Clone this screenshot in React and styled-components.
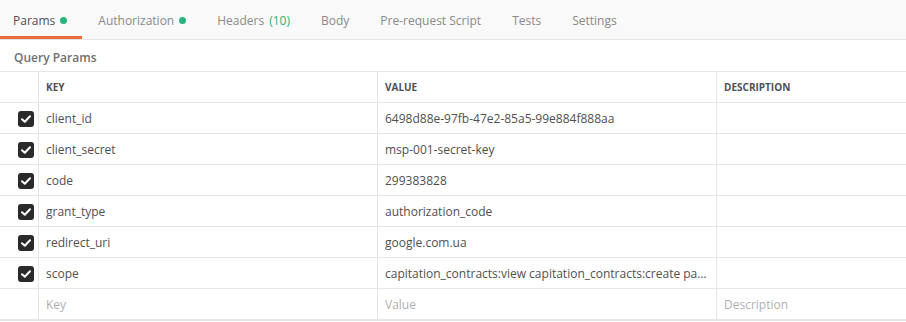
import React from 'react';
import styled, { createGlobalStyle } from 'styled-components';

const GlobalStyle = createGlobalStyle`
  html, body {
    margin: 0;
    padding: 0;
    background: #ffffff;
  }
  body {
    font-family: "Open Sans", "Liberation Sans", sans-serif;
  }
`;

const tabs = [
  { label: 'Params', dot: true, active: true },
  { label: 'Authorization', dot: true },
  { label: 'Headers', count: 10 },
  { label: 'Body' },
  { label: 'Pre-request Script' },
  { label: 'Tests' },
  { label: 'Settings' },
];

const params = [
  { key: 'client_id', value: '6498d88e-97fb-47e2-85a5-99e884f888aa' },
  { key: 'client_secret', value: 'msp-001-secret-key' },
  { key: 'code', value: '299383828' },
  { key: 'grant_type', value: 'authorization_code' },
  { key: 'redirect_uri', value: 'google.com.ua' },
  {
    key: 'scope',
    value:
      'capitation_contracts:view capitation_contracts:create party:read legal_entity:read employee:read',
  },
];

const Check = () => (
  <CheckBox>
    <svg width="10" height="8" viewBox="0 0 10 8">
      <path
        d="M1 4.2 L3.8 6.8 L9 1.2"
        fill="none"
        stroke="#fff"
        strokeWidth="2"
        strokeLinecap="round"
        strokeLinejoin="round"
      />
    </svg>
  </CheckBox>
);

const App = () => {
  return (
    <Wrap>
      <GlobalStyle />
      <TabBar>
        {tabs.map((t, idx) => (
          <Tab key={idx} active={t.active} first={idx === 0}>
            {t.label}
            {t.count && <Count>({t.count})</Count>}
            {t.dot && <Dot />}
          </Tab>
        ))}
      </TabBar>
      <SectionTitle>Query Params</SectionTitle>
      <Table>
        <HeadCell />
        <HeadCell bordered>KEY</HeadCell>
        <HeadCell bordered>VALUE</HeadCell>
        <HeadCell bordered>DESCRIPTION</HeadCell>
        {params.map((p, idx) => (
          <React.Fragment key={idx}>
            <CheckCell>
              <Check />
            </CheckCell>
            <Cell bordered>{p.key}</Cell>
            <Cell bordered>{p.value}</Cell>
            <Cell bordered />
          </React.Fragment>
        ))}
        <Cell />
        <Cell bordered placeholder>Key</Cell>
        <Cell bordered placeholder>Value</Cell>
        <Cell bordered placeholder>Description</Cell>
      </Table>
    </Wrap>
  );
};

const Wrap = styled.div`
  width: 906px;
  height: 322px;
  overflow: hidden;
  background: #fff;
`;

const TabBar = styled.div`
  display: flex;
  height: 39px;
  background: #f9f9f9;
  border-bottom: 1px solid #e4e4e4;
`;

const Tab = styled.div`
  display: flex;
  align-items: center;
  box-sizing: border-box;
  height: 39px;
  padding: 4px 15px 0 ${p => (p.first ? '13px' : '16px')};
  font-size: 12px;
  color: ${p => (p.active ? '#505050' : '#8a8a8a')};
  border-bottom: 3px solid ${p => (p.active ? '#ea6b3c' : 'transparent')};
  white-space: nowrap;
`;

const Count = styled.span`
  color: #26b47f;
  margin-left: 5px;
`;

const Dot = styled.span`
  width: 7px;
  height: 7px;
  border-radius: 50%;
  background: #26b47f;
  margin-left: 5px;
`;

const SectionTitle = styled.div`
  height: 32px;
  box-sizing: border-box;
  padding: 9px 0 0 14px;
  font-size: 12px;
  font-weight: 600;
  color: #707070;
  border-bottom: 1px solid #e6e6e6;
`;

const Table = styled.div`
  display: grid;
  grid-template-columns: 38px 339px 339px 1fr;
  grid-auto-rows: 31px;
  border-bottom: 1px solid #e6e6e6;
`;

const Cell = styled.div`
  display: block;
  box-sizing: border-box;
  min-width: 0;
  padding: 1px 7px 0 7px;
  font-size: 12px;
  line-height: 29px;
  color: ${p => (p.placeholder ? '#b0b0b0' : '#505050')};
  border-left: ${p => (p.bordered ? '1px solid #e6e6e6' : 'none')};
  border-bottom: 1px solid #e6e6e6;
  white-space: nowrap;
  overflow: hidden;
  text-overflow: ellipsis;
`;

const HeadCell = styled(Cell)`
  font-size: 10px;
  font-weight: 700;
  color: #505050;
`;

const CheckCell = styled.div`
  display: flex;
  align-items: center;
  justify-content: flex-end;
  padding: 1px 4px 0 0;
  border-bottom: 1px solid #e6e6e6;
`;

const CheckBox = styled.div`
  width: 16px;
  height: 16px;
  border-radius: 3px;
  background: #2a2a2a;
  display: flex;
  align-items: center;
  justify-content: center;
`;

export default App;
